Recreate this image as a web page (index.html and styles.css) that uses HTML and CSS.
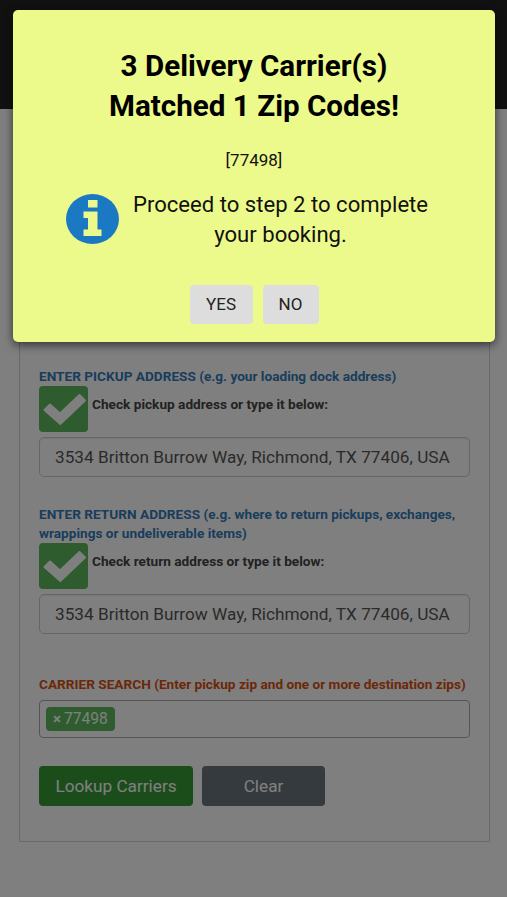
FILE: index.html
```html
<!DOCTYPE html>
<html lang="en">
<head>
  <meta charset="UTF-8" />
  <meta name="viewport" content="width=device-width, initial-scale=1.0"/>
  <title>Carrier Lookup</title>
  <link rel="stylesheet" href="styles.css">
</head>
<body>
  <header class="topbar"></header>

  <main class="page">
    <form class="panel">
      <section class="field pickup">
        <label class="heading">ENTER PICKUP ADDRESS (e.g. your loading dock address)</label>
        <div class="check-row">
          <span class="check">
            <svg viewBox="0 0 49 46"><path d="M5.5 24L11 18.5L21 27.5L40.5 9L46 14.5L21.3 38z" fill="#fff" stroke="#fff" stroke-width="2" stroke-linejoin="round"/></svg>
          </span>
          <span class="check-text">Check pickup address or type it below:</span>
        </div>
        <input class="address" type="text" value="3534 Britton Burrow Way, Richmond, TX 77406, USA" />
      </section>

      <section class="field return">
        <label class="heading">ENTER RETURN ADDRESS (e.g. where to return pickups, exchanges,<br>wrappings or undeliverable items)</label>
        <div class="check-row">
          <span class="check">
            <svg viewBox="0 0 49 46"><path d="M5.5 24L11 18.5L21 27.5L40.5 9L46 14.5L21.3 38z" fill="#fff" stroke="#fff" stroke-width="2" stroke-linejoin="round"/></svg>
          </span>
          <span class="check-text">Check return address or type it below:</span>
        </div>
        <input class="address" type="text" value="3534 Britton Burrow Way, Richmond, TX 77406, USA" />
      </section>

      <section class="field search">
        <label class="heading orange">CARRIER SEARCH (Enter pickup zip and one or more destination zips)</label>
        <div class="zips">
          <span class="zip"><b class="remove">×</b><span class="zip-code">77498</span></span>
        </div>
      </section>

      <div class="actions">
        <button type="button" class="btn lookup"><span>Lookup Carriers</span></button>
        <button type="button" class="btn clear"><span>Clear</span></button>
      </div>
    </form>
  </main>

  <div class="overlay">
    <div class="modal">
      <h2 class="modal-title">3 Delivery Carrier(s)<br>Matched 1 Zip Codes!</h2>
      <p class="modal-zips">[77498]</p>
      <div class="modal-body">
        <svg class="info" viewBox="0 0 53 50">
          <ellipse cx="26.5" cy="25" rx="26.5" ry="25" fill="#1b79c4"/>
          <path d="M22 6h9.5v7.5h-9.5zM17.5 17.5h14v18h4v6.5h-18v-6.5h4.5v-11.5h-4.5z" fill="#ecfa8c"/>
        </svg>
        <p class="modal-text">Proceed to step 2 to complete<br>your booking.</p>
      </div>
      <div class="modal-buttons">
        <button type="button" class="modal-btn yes">YES</button>
        <button type="button" class="modal-btn no">NO</button>
      </div>
    </div>
  </div>
</body>
</html>
```
FILE: styles.css
```css
* {
  box-sizing: border-box;
}
body {
  font-family: Roboto, Arial, sans-serif;
  margin: 0;
  height: 900px;
  overflow: hidden;
  background-color: #fff;
  color: #444;
}
.topbar {
  height: 109px;
  background-color: #222;
}
.page {
  height: 788px;
  padding: 0 17px 55px 19px;
}
.panel {
  height: 733px;
  padding: 258px 19px 0;
  border: 1px solid #d2d2d2;
  border-top: none;
}
.heading {
  display: block;
  font-size: 13.64px;
  font-weight: bold;
  line-height: 19px;
  white-space: nowrap;
  color: #337ab7;
}
.heading.orange {
  color: #d9500f;
}
.check-row {
  display: flex;
  gap: 4px;
}
.check {
  width: 49px;
  height: 46px;
  border-radius: 4px;
  background-color: #5cb85c;
}
.check svg {
  display: block;
}
.check-text {
  margin-top: 9px;
  font-size: 13.65px;
  font-weight: bold;
  line-height: 19px;
}
.address {
  display: block;
  width: 100%;
  height: 40px;
  margin-top: 5px;
  padding: 0 15px;
  border: 1px solid #ccc;
  border-radius: 5px;
  background-color: #fff;
  box-shadow: inset 0 1px 1px rgba(0, 0, 0, 0.08);
  font-family: inherit;
  font-size: 17.22px;
  color: #555;
}
.return {
  margin-top: 28px;
}
.search {
  margin-top: 41px;
}
.zips {
  display: flex;
  height: 38px;
  margin-top: 6px;
  padding: 6px;
  border: 1px solid #aaa;
  border-radius: 4px;
}
.zip {
  display: flex;
  align-items: center;
  gap: 3px;
  width: 69px;
  height: 24px;
  padding-left: 7px;
  border-radius: 4px;
  background-color: #5cb85c;
  font-size: 15.6px;
  color: #fff;
}
.remove {
  font-size: 15px;
}
.actions {
  display: flex;
  gap: 9px;
  margin-top: 28px;
}
.btn {
  height: 40px;
  padding: 0;
  border: none;
  border-radius: 4px;
  font-family: inherit;
  font-size: 17.2px;
  color: #fff;
}
.lookup {
  width: 154px;
  background-color: #369a36;
}
.clear {
  width: 123px;
  background-color: #69757a;
}

/* confirm dialog */
.overlay {
  position: absolute;
  top: 0;
  left: 0;
  width: 100%;
  height: 897px;
  padding: 10px 12px 0 13px;
  background-color: rgba(0, 0, 0, 0.5);
}
.modal {
  height: 332px;
  padding-top: 36px;
  border-radius: 5px;
  background-color: #ecfa8c;
  box-shadow: 0 3px 10px rgba(0, 0, 0, 0.6);
  text-align: center;
  color: #111;
}
.modal-title {
  margin: 0;
  font-size: 29.6px;
  line-height: 40px;
  color: #000;
}
.modal-zips {
  margin: 23px 0 0;
  font-size: 17px;
  line-height: 22px;
}
.modal-body {
  display: flex;
  align-items: flex-start;
  gap: 14px;
  margin-top: 18px;
  padding-left: 53px;
}
.info {
  width: 53px;
  height: 50px;
  margin-top: 5px;
}
.modal-text {
  margin: 0;
  font-size: 22.1px;
  line-height: 30px;
}
.modal-buttons {
  display: flex;
  justify-content: center;
  gap: 10px;
  margin-top: 36px;
}
.modal-btn {
  height: 39px;
  padding: 0 0 2px;
  border: none;
  border-radius: 4px;
  background-color: #ddd;
  font-family: inherit;
  font-size: 17px;
  color: #222;
}
.yes {
  width: 63px;
}
.no {
  width: 56px;
}
```
